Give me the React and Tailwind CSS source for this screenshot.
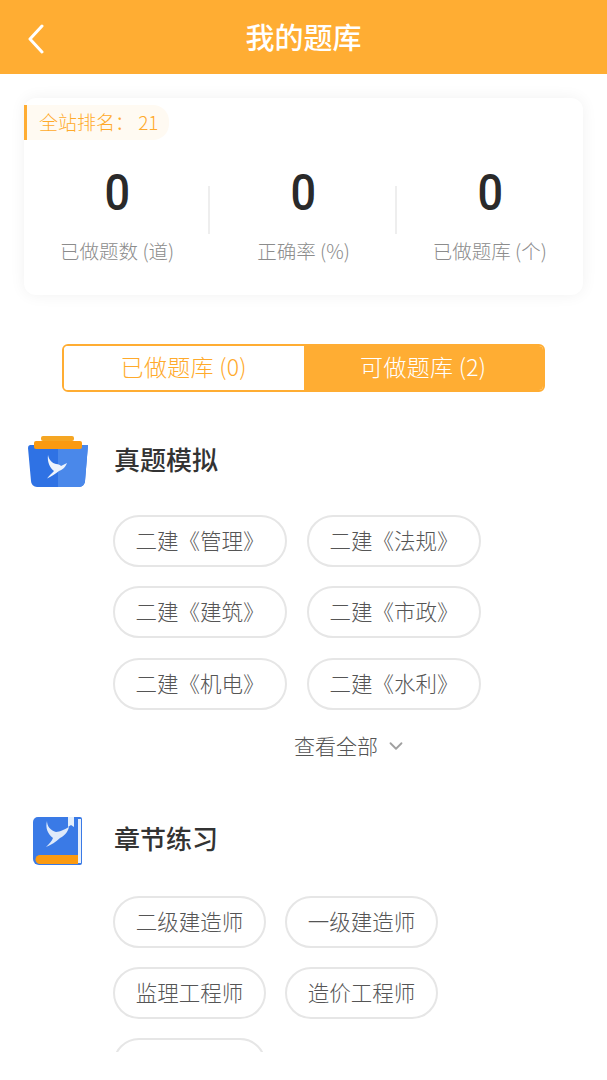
import { ChevronDown } from "lucide-react";

const font = { fontFamily: '"Noto Sans CJK SC", "Noto Sans", sans-serif' };

const stats = [
  { value: "0", label: "已做题数 (道)" },
  { value: "0", label: "正确率 (%)" },
  { value: "0", label: "已做题库 (个)" },
];

const mockChips = ["二建《管理》", "二建《法规》", "二建《建筑》", "二建《市政》", "二建《机电》", "二建《水利》"];
const chapterChips = ["二级建造师", "一级建造师", "监理工程师", "造价工程师", ""];

const FolderIcon = () => (
  <svg viewBox="0 0 62 52" className="w-[62px] h-[52px] shrink-0">
    <rect x="14" y="0" width="33" height="5" rx="2" fill="#f5a623" />
    <path d="M3 9h58l-3 36a6 6 0 0 1-6 6H10a6 6 0 0 1-6-6L1 12a3 3 0 0 1 2-3z" fill="#2f72e4" />
    <path d="M31 9h30l-3 36a6 6 0 0 1-6 6H31z" fill="#4a88ea" />
    <rect x="7" y="5" width="48" height="8" rx="2" fill="#fb9a10" />
    <path
      d="M21 19c1 5 4 8 8 9 3 0 4 1 5 2l6-3c-2 5-5 7-8 8-4 3-8 6-12 7.500 2-2.500 5-5.500 7-7.500-4-3-7-9-6-16z"
      fill="#eef4fc"
    />
  </svg>
);

const BookIcon = () => (
  <svg viewBox="0 0 52 52" className="w-[52px] h-[52px] shrink-0">
    <path d="M6 1h42a2 2 0 0 1 2 2v44a2 2 0 0 1-2 2H7a6 6 0 0 1-6-6V6a5 5 0 0 1 5-5z" fill="#3a7ae6" />
    <path d="M46 3h3v44h-3z" fill="#e8f0fb" />
    <path d="M36 1h6v10l-3-2-3 2z" fill="#e4effb" />
    <path d="M8 39h38v9H8a4.500 4.500 0 0 1 0-9z" fill="#fb9a10" />
    <path
      d="M15 5c0 5 3 9 9 11 4 0 9-3 13-5-1 5-5 9-9 11-4 4-9 7-14 9 3-3 6-6 7-9-5-4-8-10-6-17z"
      fill="#dfeafa"
    />
  </svg>
);

const Chip = ({ text, width }) => (
  <div className={`${width} h-[52px] rounded-full border-2 border-[#e6e6e6] flex items-center justify-center pb-[2px] text-[21.500px] font-light text-[#555555] bg-white`}>
    {text}
  </div>
);

const App = () => {
  return (
    <div className="w-[607px] h-[1080px] bg-white overflow-hidden" style={font}>
      <div className="h-[1052px] overflow-hidden">
        <header className="relative h-[74px] bg-[#ffad33] flex items-center justify-center">
          <svg viewBox="0 0 20 30" className="absolute left-[26px] top-[24px] w-[20px] h-[30px]" fill="none">
            <path d="M16 2 4 15l12 13" stroke="#fff" strokeWidth="3" strokeLinecap="round" strokeLinejoin="round" />
          </svg>
          <h1 className="text-[29px] font-medium text-white">我的题库</h1>
        </header>

        <section className="mx-[24px] mt-[24px] h-[197px] rounded-xl bg-white shadow-[0_0_16px_rgba(0,0,0,0.06)] pt-[7px]">
          <div className="w-[145px] h-[35px] border-l-[3px] border-[#ffad33] bg-[#fffaf2] rounded-r-2xl flex items-center pl-[12px] text-[19px] font-light text-[#ffaa2b] whitespace-pre">
            全站排名： 21
          </div>
          <div className="grid grid-cols-3 mt-[22px]">
            {stats.map((s, i) => (
              <div key={s.label} className="relative flex flex-col items-center">
                <span className="text-[50px] leading-[62px] font-medium text-[#2a2a2a] inline-block scale-x-[0.9]" style={{ fontFamily: "Roboto, sans-serif" }}>
                  {s.value}
                </span>
                <span className="mt-[13px] text-[19.500px] leading-[28px] font-light text-[#8c8c8c]">{s.label}</span>
                {i < 2 && <div className="absolute right-0 top-[24px] w-[2px] h-[48px] bg-[#eeeeee]" />}
              </div>
            ))}
          </div>
        </section>

        <div className="mx-[62px] mt-[49px] h-[48px] flex rounded-md overflow-hidden border-2 border-[#ffad33] text-[23px] font-light tracking-[0.3px]">
          <div className="flex-1 flex items-center justify-center pb-[4px] text-[#ffaa2b] bg-white">已做题库 (0)</div>
          <div className="flex-1 flex items-center justify-center pb-[4px] text-white bg-[#ffad33]">可做题库 (2)</div>
        </div>

        <section className="mt-[44px] pl-[27px]">
          <div className="flex items-center h-[52px]">
            <FolderIcon />
            <h2 className="ml-[25px] pb-[8px] text-[26px] font-medium text-[#333333]">真题模拟</h2>
          </div>
          <div className="ml-[86px] mt-[27px] grid grid-cols-[174px_174px] gap-x-[20px] gap-y-[19.4px]">
            {mockChips.map((c) => (
              <Chip key={c} text={c} width="w-[174px]" />
            ))}
          </div>
          <div className="ml-[267px] mt-[19px] flex items-center text-[21px] leading-[32px] font-light text-[#555555]">
            查看全部
            <ChevronDown className="ml-[7px] mt-[3px] text-[#a0a0a0]" size={22} />
          </div>
        </section>

        <section className="mt-[55px] pl-[32px]">
          <div className="flex items-center h-[52px]">
            <BookIcon />
            <h2 className="ml-[30px] pb-[8px] text-[26px] font-medium text-[#333333]">章节练习</h2>
          </div>
          <div className="ml-[81px] mt-[28px] grid grid-cols-[153px_153px] gap-x-[19px] gap-y-[19px]">
            {chapterChips.map((c, i) => (
              <Chip key={i} text={c} width="w-[153px]" />
            ))}
          </div>
        </section>
      </div>
    </div>
  );
};

export default App;
